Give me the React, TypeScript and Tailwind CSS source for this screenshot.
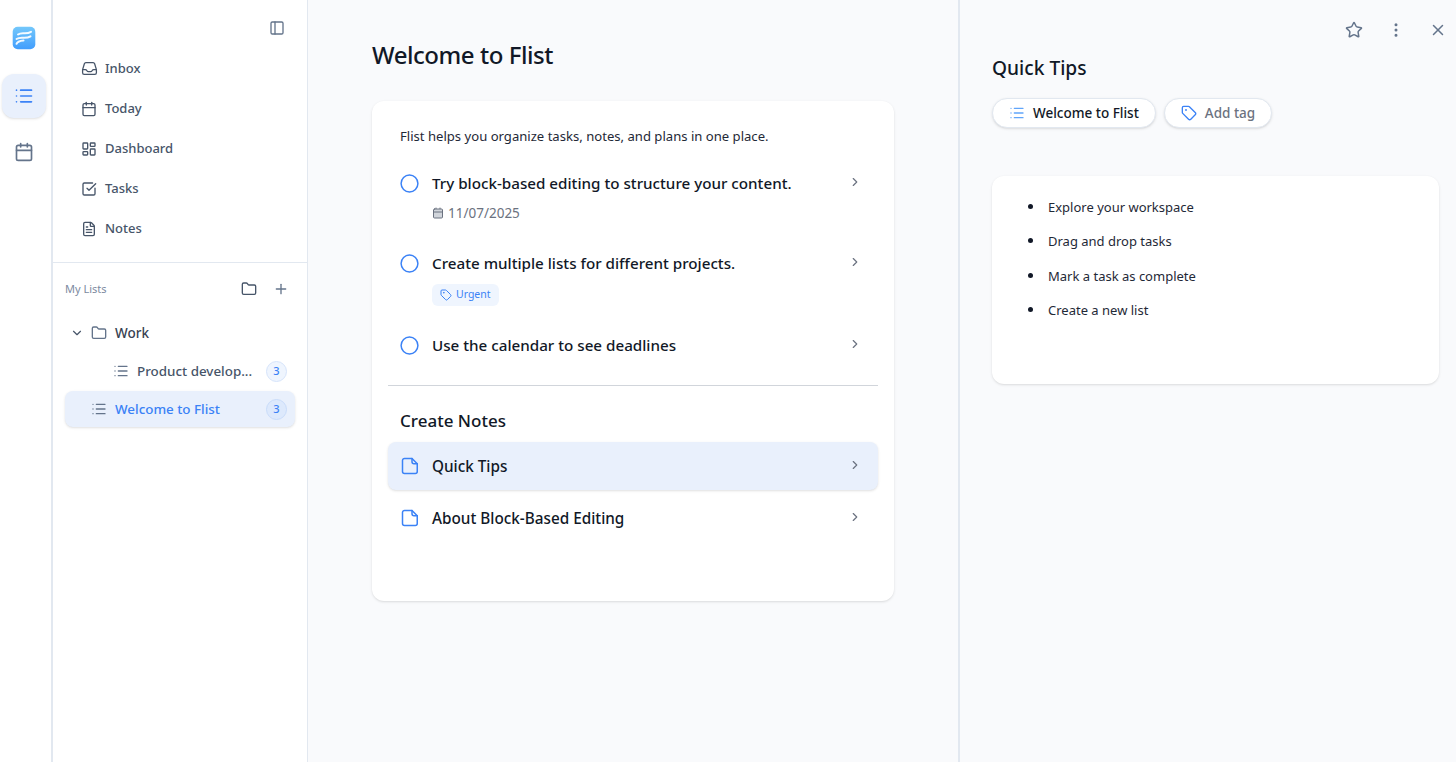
import { Calendar, LayoutDashboard, SquareCheckBig, FileText, PanelLeft, Folder, Plus, ChevronDown, ChevronRight, List, Tag, Star, EllipsisVertical, X } from "lucide-react";

function InboxIcon({ className }: { className?: string }) {
  return (
    <svg width="17" height="17" viewBox="0 0 24 24" fill="none" stroke="currentColor" strokeWidth="1.8" strokeLinecap="round" strokeLinejoin="round" className={className}>
      <path d="M2.25 13.5h3.86a2.25 2.25 0 0 1 2.012 1.244l.256.512a2.25 2.25 0 0 0 2.013 1.244h3.218a2.25 2.25 0 0 0 2.013-1.244l.256-.512a2.25 2.25 0 0 1 2.013-1.244h3.859m-19.5.338V18a2.25 2.25 0 0 0 2.25 2.25h15A2.25 2.25 0 0 0 21.75 18v-4.162c0-.224-.034-.447-.1-.661L19.24 5.338a2.25 2.25 0 0 0-2.15-1.588H6.911a2.25 2.25 0 0 0-2.15 1.588L2.35 13.177a2.25 2.25 0 0 0-.1.661Z" />
    </svg>
  );
}

const nav = [
  { label: "Inbox", Icon: InboxIcon },
  { label: "Today", Icon: Calendar },
  { label: "Dashboard", Icon: LayoutDashboard },
  { label: "Tasks", Icon: SquareCheckBig },
  { label: "Notes", Icon: FileText },
];

function Logo() {
  return (
    <svg width="24" height="24" viewBox="0 0 24 24">
      <defs>
        <linearGradient id="lg" x1="0" y1="0" x2="0" y2="1">
          <stop offset="0" stopColor="#74c8fb" />
          <stop offset="1" stopColor="#419dfd" />
        </linearGradient>
      </defs>
      <rect x="0.700" y="0.700" width="22.600" height="22.600" rx="5" fill="url(#lg)" />
      <path d="M6 8.500C10 5.500 13.500 9 19 5.800M4.500 13C8.500 10 13.500 13.500 18.500 10.300M4.500 17.800C5.500 15.300 8.500 14.800 11.500 14.500" stroke="#fff" strokeOpacity="0.92" strokeWidth="2" fill="none" strokeLinecap="round" />
    </svg>
  );
}

function NoteIcon() {
  return (
    <svg width="20" height="20" viewBox="0 0 20 20" fill="none" stroke="#3b82f6" strokeWidth="1.5" strokeLinecap="round" strokeLinejoin="round" className="shrink-0">
      <path d="M4.500 2.500H12L17.250 7.750V15.500A2 2 0 0 1 15.250 17.500H4.500A2 2 0 0 1 2.500 15.500V4.500A2 2 0 0 1 4.500 2.500Z" />
      <path d="M12 2.500V5.750A2 2 0 0 0 14 7.750H17.250" />
    </svg>
  );
}

function Task({ title, children, h }: { title: string; children?: React.ReactNode; h: string }) {
  return (
    <div className={`flex items-start ${h}`}>
      <svg width="19" height="19" viewBox="0 0 19 19" fill="none" stroke="#3b82f6" strokeWidth="1.5" className="ml-[12px] mt-[2px] shrink-0">
        <circle cx="9.500" cy="9.500" r="8.400" />
      </svg>
      <div className="ml-[13px] flex-1">
        <div className="text-[15.200px] leading-[22px] font-medium text-[#111827]">{title}</div>
        {children}
      </div>
      <ChevronRight size={14} className="mr-[16px] mt-[3px] text-[#6b7280]" />
    </div>
  );
}

function NoteRow({ title, active }: { title: string; active?: boolean }) {
  return (
    <div className={`flex h-[48px] items-center rounded-lg pl-[12px] pr-[16px] ${active ? "bg-[#e9f0fc] shadow-sm" : ""}`}>
      <NoteIcon />
      <span className="ml-[12px] flex-1 text-[15.300px] font-medium text-[#111827]">{title}</span>
      <ChevronRight size={14} className="-mt-[3px] text-[#6b7280]" />
    </div>
  );
}

export default function App() {
  return (
    <div className="flex h-[762px] w-[1456px] overflow-hidden bg-white font-['Noto_Sans',sans-serif]">
      <aside className="flex w-[53px] shrink-0 flex-col items-center border-r-2 border-[#e2e8f0] bg-white pt-[26px]">
        <div className="mr-[3px] h-[24px]"><Logo /></div>
        <div className="mt-[24px] mr-[3px] flex h-[44px] w-[44px] items-center justify-center rounded-xl bg-[#e9f0fc] shadow-sm">
          <List size={20} className="text-[#3b82f6]" />
        </div>
        <div className="mt-[23px] mr-[3px] flex h-[22px] w-[22px] items-center justify-center">
          <Calendar size={20} className="text-[#64748b]" />
        </div>
      </aside>

      <aside className="flex w-[255px] shrink-0 flex-col border-r border-[#e2e8f0] bg-white">
        <div className="flex h-[48px] items-start justify-end pt-[20px] pr-[22px]">
          <PanelLeft size={16} className="text-[#64748b]" />
        </div>
        <nav className="flex flex-col">
          {nav.map(({ label, Icon }) => (
            <div key={label} className="flex h-[40px] items-center pl-[28px] pt-[1px] text-[13px] font-medium text-[#475569]">
              <div className="flex w-[16px] justify-center"><Icon size={16} className="shrink-0 text-[#475569]" /></div>
              <span className="ml-[8px]">{label}</span>
            </div>
          ))}
        </nav>
        <div className="mt-[14px] border-t border-[#e2e8f0]" />
        <div className="flex h-[52px] items-center pl-[12px] pr-[18px]">
          <span className="flex-1 text-[11px] text-[#7c8aa0]">My Lists</span>
          <Folder size={16} className="text-[#475569]" />
          <Plus size={16} className="ml-[16px] text-[#64748b]" />
        </div>
        <div className="flex h-[36px] items-center pl-[17px] text-[13.500px] font-medium text-[#374151]">
          <ChevronDown size={14} className="text-[#475569]" />
          <Folder size={16} className="ml-[7px] text-[#64748b]" />
          <span className="ml-[8px]">Work</span>
        </div>
        <div className="mt-[1px] flex h-[38px] items-center pl-[60px] pr-[20px] text-[13.400px] font-medium text-[#475569]">
          <List size={16} className="shrink-0 text-[#64748b]" />
          <span className="ml-[8px] w-[121px] overflow-hidden whitespace-nowrap">Product develop...</span>
          <span className="ml-[8px] flex h-[21px] w-[21px] shrink-0 items-center justify-center rounded-full border border-[#d6e4fb] bg-[#eff5fe] text-[11px] text-[#3b82f6]">3</span>
        </div>
        <div className="mx-[12px] mt-[1px] flex h-[36px] items-center rounded-lg bg-[#e9f0fc] pl-[26px] pr-[8px] text-[13.400px] font-medium text-[#3b82f6] shadow-sm">
          <List size={16} className="shrink-0 text-[#64748b]" />
          <span className="ml-[8px] flex-1">Welcome to Flist</span>
          <span className="flex h-[21px] w-[21px] items-center justify-center rounded-full border border-[#c9dcfa] bg-[#dde9fc] text-[11px]">3</span>
        </div>
      </aside>

      <main className="w-[650px] shrink-0 bg-[#f9fafc] pl-[64px] pr-[64px] pt-[38px]">
        <h1 className="text-[24px] leading-[34px] font-medium tracking-[-0.45px] text-[#111827]">Welcome to Flist</h1>
        <div className="mt-[29px] h-[500px] w-[522px] rounded-xl bg-white px-[16px] pt-[26px] shadow-sm">
          <p className="pl-[12px] text-[13.100px] leading-[18px] text-[#1f2937]">Flist helps you organize tasks, notes, and plans in one place.</p>
          <div className="mt-[27px]">
            <Task title="Try block-based editing to structure your content." h="h-[80px]">
              <div className="mt-[10px] flex items-center text-[13.500px] leading-[18px] text-[#6b7280]">
                <Calendar size={12} className="fill-[#d1d5db] text-[#6b7280]" />
                <span className="ml-[4px]">11/07/2025</span>
              </div>
            </Task>
            <Task title="Create multiple lists for different projects." h="h-[82px]">
              <div className="mt-[10px] inline-flex h-[22px] items-center rounded-md bg-[#eff5fe] px-[8px] text-[10.500px] text-[#3b82f6]">
                <Tag size={12} />
                <span className="ml-[4px]">Urgent</span>
              </div>
            </Task>
            <Task title="Use the calendar to see deadlines" h="h-[40px]" />
          </div>
          <div className="mt-[11px] border-t border-[#d1d5db]" />
          <h2 className="mt-[23px] pl-[12px] text-[17px] leading-[24px] font-medium text-[#111827]">Create Notes</h2>
          <div className="mt-[9px]">
            <NoteRow title="Quick Tips" active />
            <div className="mt-[4px]"><NoteRow title="About Block-Based Editing" /></div>
          </div>
        </div>
      </main>

      <section className="flex-1 border-l-2 border-[#e2e8f0] bg-[#f9fafc] pl-[32px] pr-[17px]">
        <div className="flex h-[48px] items-center justify-end gap-[24px] pt-[12px]">
          <Star size={18} className="text-[#64748b]" />
          <EllipsisVertical size={18} className="text-[#64748b]" />
          <X size={18} className="-mr-[8px] text-[#64748b]" />
        </div>
        <h2 className="mt-[8px] text-[19.200px] leading-[24px] font-medium text-[#111827]">Quick Tips</h2>
        <div className="mt-[18px] flex gap-[8px]">
          <div className="flex h-[30px] items-center rounded-full border border-[#e2e8f0] bg-white px-[16px] text-[13.500px] font-medium text-[#111827] shadow-sm">
            <List size={16} className="text-[#60a5fa]" />
            <span className="ml-[8px] pt-[1px]">Welcome to Flist</span>
          </div>
          <div className="flex h-[30px] items-center rounded-full border border-[#e2e8f0] bg-white px-[16px] text-[13.500px] font-medium text-[#6b7280] shadow-sm">
            <Tag size={16} className="text-[#3b82f6]" />
            <span className="ml-[8px] pt-[1px]">Add tag</span>
          </div>
        </div>
        <div className="mt-[48px] h-[208px] w-[447px] rounded-xl bg-white pt-[14px] shadow-sm">
          <ul className="pl-[36px] text-[13px] leading-[34.400px] text-[#1f2937]">
            {["Explore your workspace", "Drag and drop tasks", "Mark a task as complete", "Create a new list"].map((t) => (
              <li key={t} className="flex items-center">
                <span className="-mt-[2px] h-[5px] w-[5px] shrink-0 rounded-full bg-[#111827]" />
                <span className="ml-[15px]">{t}</span>
              </li>
            ))}
          </ul>
        </div>
      </section>
    </div>
  );
}
